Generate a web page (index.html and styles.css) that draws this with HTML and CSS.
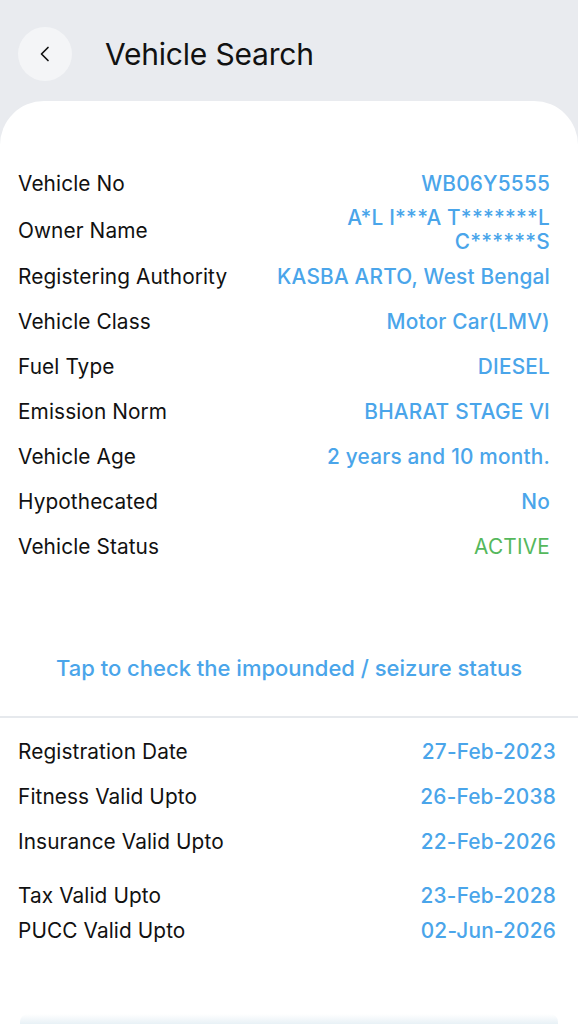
FILE: index.html
```html
<!DOCTYPE html>
<html>
<head>
  <title>Vehicle Search</title>
  <link rel="stylesheet" href="styles.css">
</head>
<body>
  <header class="topbar">
    <button class="back-btn" aria-label="Back">
      <svg width="18" height="18" viewBox="0 0 18 18">
        <path d="M12 2.5 L5.5 9 L12 15.5" fill="none" stroke="#111" stroke-width="1.7" stroke-linecap="round" stroke-linejoin="round"/>
      </svg>
    </button>
    <h1>Vehicle Search</h1>
  </header>

  <main class="card">
    <section class="details">
      <div class="row"><span class="label">Vehicle No</span><span class="value">WB06Y5555</span></div>
      <div class="row"><span class="label">Owner Name</span><span class="value">A*L I***A T*******L<br>C******S</span></div>
      <div class="row"><span class="label">Registering Authority</span><span class="value">KASBA ARTO, West Bengal</span></div>
      <div class="row"><span class="label">Vehicle Class</span><span class="value">Motor Car(LMV)</span></div>
      <div class="row"><span class="label">Fuel Type</span><span class="value">DIESEL</span></div>
      <div class="row"><span class="label">Emission Norm</span><span class="value">BHARAT STAGE VI</span></div>
      <div class="row"><span class="label">Vehicle Age</span><span class="value">2 years and 10 month.</span></div>
      <div class="row"><span class="label">Hypothecated</span><span class="value">No</span></div>
      <div class="row"><span class="label">Vehicle Status</span><span class="value status">ACTIVE</span></div>
    </section>

    <p class="seizure-link">Tap to check the impounded / seizure status</p>

    <hr class="divider">

    <section class="details dates">
      <div class="row"><span class="label">Registration Date</span><span class="value">27-Feb-2023</span></div>
      <div class="row"><span class="label">Fitness Valid Upto</span><span class="value">26-Feb-2038</span></div>
      <div class="row"><span class="label">Insurance Valid Upto</span><span class="value">22-Feb-2026</span></div>
      <div class="row row-short row-gap"><span class="label">Tax Valid Upto</span><span class="value">23-Feb-2028</span></div>
      <div class="row row-short"><span class="label">PUCC Valid Upto</span><span class="value">02-Jun-2026</span></div>
    </section>

    <div class="bottom-shade"></div>
  </main>
</body>
</html>
```

FILE: styles.css
```css
/* Page */
body {
  margin: 0;
  padding: 0;
  background-color: #e9ebef;
  font-family: Inter, "Noto Sans", sans-serif;
  color: #111;
  height: 1024px;
  overflow: hidden;
}

/* Header */
.topbar {
  display: flex;
  align-items: center;
  height: 101px;
  padding: 0 0 0 18px;
  box-sizing: border-box;
}
.back-btn {
  width: 54px;
  height: 54px;
  border-radius: 50%;
  border: none;
  background-color: #f4f5f7;
  display: flex;
  align-items: center;
  justify-content: center;
  padding: 0;
  margin-top: 6px;
  cursor: pointer;
}
.topbar h1 {
  margin: 6px 0 0 33px;
  font-size: 30px;
  font-weight: 400;
  letter-spacing: -0.2px;
}

/* Card */
.card {
  position: relative;
  background-color: #fff;
  border-radius: 44px 44px 0 0;
  padding-top: 60px;
  height: 923px;
  box-sizing: border-box;
}
.details {
  padding: 0 28px 0 18px;
}
.row {
  display: flex;
  justify-content: space-between;
  align-items: center;
  min-height: 45px;
}
.label {
  font-size: 20.8px;
  letter-spacing: 0.1px;
}
.value {
  font-size: 20.8px;
  font-weight: 500;
  color: #4aa5ea;
  text-align: right;
  line-height: 24px;
  letter-spacing: 0.2px;
}
.status {
  color: #55b85c;
  font-weight: 400;
}

.seizure-link {
  margin: 86px 0 0;
  text-align: center;
  font-size: 22px;
  font-weight: 500;
  color: #4aa5ea;
  line-height: 26px;
}

.divider {
  border: none;
  height: 2px;
  background-color: #e6e9ed;
  margin: 35px 0 0;
}

.dates {
  padding: 11px 22px 0 18px;
}
.row-short {
  min-height: 35px;
}
.row-gap {
  margin-top: 14px;
}

.bottom-shade {
  position: absolute;
  left: 20px;
  right: 20px;
  bottom: 0;
  height: 10px;
  background: linear-gradient(to bottom, rgba(235, 243, 248, 0), #e8f1f6);
  border-radius: 8px 8px 0 0;
}
```
